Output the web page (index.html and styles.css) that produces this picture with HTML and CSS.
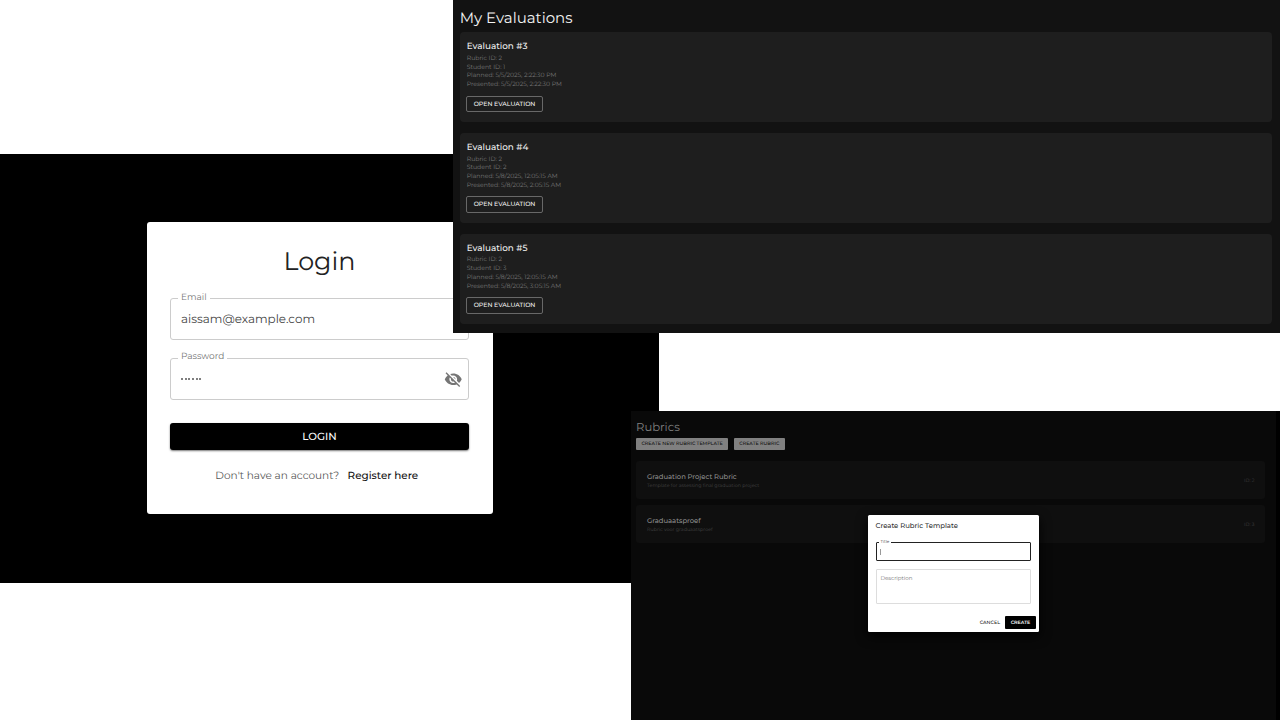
FILE: index.html
```html
<!DOCTYPE html>
<html lang="en">
<head>
<meta charset="utf-8">
<title>Evaluations</title>
<link rel="stylesheet" href="styles.css">
</head>
<body>
<main class="canvas">
  <section class="window login-window">
    <form class="login-card">
      <h1 class="login-title"><span>Login</span></h1>
      <div class="field"><span class="field-label email-label">Email</span><span class="field-value email-value">aissam@example.com</span></div>
      <div class="field password-field"><span class="field-label password-label">Password</span><span class="dots"><i></i><i></i><i></i><i></i><i></i><i></i></span>
        <svg class="eye" viewBox="0 0 24 24"><path d="M12 7c2.76 0 5 2.24 5 5 0 .65-.13 1.26-.36 1.83l2.92 2.92c1.51-1.26 2.7-2.89 3.43-4.75-1.73-4.39-6-7.5-11-7.5-1.4 0-2.74.25-3.98.7l2.16 2.16C10.74 7.13 11.35 7 12 7zM2 4.27l2.28 2.28.46.46C3.08 8.3 1.78 10.02 1 12c1.73 4.39 6 7.5 11 7.5 1.55 0 3.03-.3 4.38-.84l.42.42L19.73 22 21 20.73 3.27 3 2 4.27zM7.53 9.8l1.55 1.55c-.05.21-.08.43-.08.65 0 1.66 1.34 3 3 3 .22 0 .44-.03.65-.08l1.55 1.55c-.67.33-1.41.53-2.2.53-2.76 0-5-2.24-5-5 0-.79.2-1.53.53-2.2zm4.31-.78l3.15 3.15.02-.16c0-1.66-1.34-3-3-3l-.17.01z"/></svg>
      </div>
      <button class="login-button" type="button"><span>LOGIN</span></button>
      <p class="register"><span class="question">Don't have an account?</span><a class="register-link">Register here</a></p>
    </form>
  </section>

  <section class="window evaluations-window">
    <h2 class="evaluations-title">My Evaluations</h2>
    <div class="evaluation-list">
      <article class="evaluation">
        <h3 class="evaluation-name">Evaluation #3</h3>
        <p class="detail rubric-id">Rubric ID: 2</p><p class="detail student-id">Student ID: 1</p>
        <p class="detail planned">Planned: 5/5/2025, 2:22:30 PM</p><p class="detail presented">Presented: 5/5/2025, 2:22:30 PM</p>
        <button class="open-button" type="button">OPEN EVALUATION</button>
      </article>
      <article class="evaluation">
        <h3 class="evaluation-name">Evaluation #4</h3>
        <p class="detail rubric-id">Rubric ID: 2</p><p class="detail student-id">Student ID: 2</p>
        <p class="detail planned">Planned: 5/8/2025, 12:05:15 AM</p><p class="detail presented">Presented: 5/8/2025, 2:05:15 AM</p>
        <button class="open-button" type="button">OPEN EVALUATION</button>
      </article>
      <article class="evaluation">
        <h3 class="evaluation-name">Evaluation #5</h3>
        <p class="detail rubric-id">Rubric ID: 2</p><p class="detail student-id">Student ID: 3</p>
        <p class="detail planned">Planned: 5/8/2025, 12:05:15 AM</p><p class="detail presented">Presented: 5/8/2025, 3:05:15 AM</p>
        <button class="open-button" type="button">OPEN EVALUATION</button>
      </article>
    </div>
  </section>

  <section class="window rubrics-window">
    <div class="rubrics-page">
      <h2 class="rubrics-title">Rubrics</h2>
      <div class="rubric-actions"><button class="rubric-button template-button" type="button">CREATE NEW RUBRIC TEMPLATE</button><button class="rubric-button create-rubric" type="button">CREATE RUBRIC</button></div>
      <div class="rubric-list">
        <article class="rubric"><div><h3 class="rubric-name">Graduation Project Rubric</h3><p class="rubric-note">Template for assessing final graduation project</p></div><span class="rubric-id-tag">ID: 2</span></article>
        <article class="rubric"><div><h3 class="rubric-name">Graduaatsproef</h3><p class="rubric-note">Rubric voor graduaatsproef</p></div><span class="rubric-id-tag">ID: 3</span></article>
      </div>
    </div>
    <div class="dialog">
      <h3 class="dialog-title">Create Rubric Template</h3>
      <div class="title-field"><span class="title-label">Title</span><span class="caret"></span></div>
      <div class="description-field">Description</div>
      <div class="dialog-actions"><button class="cancel-button" type="button">CANCEL</button><button class="create-button" type="button">CREATE</button></div>
    </div>
  </section>
</main>
</body>
</html>
```
FILE: styles.css
```css
* { box-sizing: border-box; }
body { margin: 0; background: #fff; font-family: Montserrat, Inter, "Open Sans", sans-serif; text-rendering: geometricPrecision; }
h1, h2, h3, p { margin: 0; font-weight: 400; white-space: nowrap; }
button { font-family: inherit; text-rendering: inherit; white-space: nowrap; border: 0; padding: 0; margin: 0; }
.canvas { position: relative; width: 1280px; height: 720px; overflow: hidden; }
.window { position: absolute; overflow: hidden; }

.login-window { left: 0; top: 154px; width: 659px; height: 429.4px; background: #000; padding: 67.7px 0 0 146.7px; }
.login-card { width: 346.3px; height: 292px; background: #fff; border-radius: 3px; padding: 21px 24px 0 23.3px; }
.login-title { font-size: 25.4px; line-height: 37px; text-align: center; color: #222; }
.field { position: relative; height: 42px; margin-top: 18.3px; border: 1px solid #ccc; border-radius: 3px; display: flex; align-items: center; padding: 0 6px 0 10px; }
.password-field { margin-top: 17.8px; padding-right: 5.5px; justify-content: space-between; }
.field-label { position: absolute; left: 7px; top: -8.3px; padding: 0 3px; background: #fff; color: #777; font-size: 9px; line-height: 13px; }
.field-value { font-size: 11.9px; line-height: 15px; color: #444; }
.dots { display: flex; gap: 1.7px; }
.dots i { width: 2px; height: 2px; border-radius: 1px; background: #555; }
.eye { width: 18.5px; height: 18.5px; fill: #757575; }
.login-button { display: block; width: 100%; height: 27.5px; margin-top: 23.2px; border-radius: 3px; background: #000; color: #fff; font-size: 10.4px; font-weight: 500; line-height: 27px; box-shadow: 0 1px 2px #0008; }
.register { display: flex; align-items: center; padding-left: 45.3px; margin-top: 16.7px; line-height: 16px; font-size: 10.5px; color: #555; }
.question { width: 132.3px; }
.register-link { color: #111; font-weight: 500; padding-top: 1px; font-size: 10.4px; }

.evaluations-window { left: 453px; top: 0; width: 827px; height: 333px; background: #121212; padding: 7px 8px 0 6.7px; }
.evaluations-title { font-size: 15px; line-height: 21px; color: #f4f4f4; }
.evaluation-list { display: flex; flex-direction: column; gap: 10.8px; margin-top: 4px; }
.evaluation { height: 90px; flex: none; background: #1e1e1e; border-radius: 4px; padding: 8.4px 7px; }
.evaluation-name { font-size: 8.8px; line-height: 13px; font-weight: 500; color: #f0f0f0; }
.detail { font-size: 6.15px; line-height: 8.8px; color: #777; }
.rubric-id { margin-top: .5px; }
.open-button { display: block; width: 77px; height: 16.5px; margin: 6.6px 0 0 -.7px; background: transparent; border: 1px solid #686868; border-radius: 2px; color: #f4f4f4; font-size: 6.2px; font-weight: 500; line-height: 14.8px; }

.rubrics-window { left: 630.5px; top: 411.3px; width: 649.5px; height: 308.7px; background: #000; }
.rubrics-page { width: 645.5px; height: 309px; background: #090909; padding: 7.5px 11px 0 5.5px; }
.rubrics-title { font-size: 11.6px; line-height: 16px; color: #808080; }
.rubric-actions { display: flex; gap: 5.5px; margin-top: 3.2px; }
.rubric-button { height: 12.5px; border-radius: 1px; background: #808080; color: #111; font-size: 4.8px; font-weight: 500; line-height: 13px; }
.template-button { width: 92.3px; }
.create-rubric { width: 51px; }
.rubric-list { display: flex; flex-direction: column; gap: 5.8px; margin-top: 10.6px; }
.rubric { height: 38px; background: #0f0f0f; border-radius: 3px; display: flex; align-items: center; justify-content: space-between; padding: 2px 10.5px 0 11px; }
.rubric-name { font-size: 6.8px; font-weight: 500; line-height: 10px; color: #909090; }
.rubric-note { font-size: 4.8px; line-height: 8.6px; color: #444; }
.rubric-id-tag { font-size: 4.8px; color: #3f3f3f; }
.dialog { position: absolute; left: 237px; top: 103.3px; width: 171px; height: 117px; background: #fff; border-radius: 1.5px; padding: 5.5px 8px 0; box-shadow: 0 4px 12px #000; }
.dialog-title { font-size: 6.9px; font-weight: 500; line-height: 11px; color: #333; }
.title-field { position: relative; height: 19px; margin-top: 10.6px; border: 1px solid #222; border-radius: 1px; padding: 6px 3.5px; }
.title-label { position: absolute; left: 2.5px; top: -3.1px; padding: 0 1.5px; background: #fff; font-size: 4.2px; line-height: 6px; color: #444; }
.caret { display: block; width: 1px; height: 6.5px; background: #999; }
.description-field { height: 35px; margin-top: 8.5px; border: 1px solid #ddd; border-radius: 1px; padding: 5px 4px; color: #777; font-size: 5.5px; line-height: 8px; }
.dialog-actions { display: flex; align-items: center; justify-content: flex-end; gap: 5px; margin: 12px -5.5px 0 0; }
.cancel-button { background: none; color: #222; font-size: 4.8px; font-weight: 500; padding-top: 1px; }
.create-button { width: 31px; height: 12.5px; border-radius: 1px; background: #000; color: #fff; font-size: 4.8px; font-weight: 600; line-height: 14px; }
```
